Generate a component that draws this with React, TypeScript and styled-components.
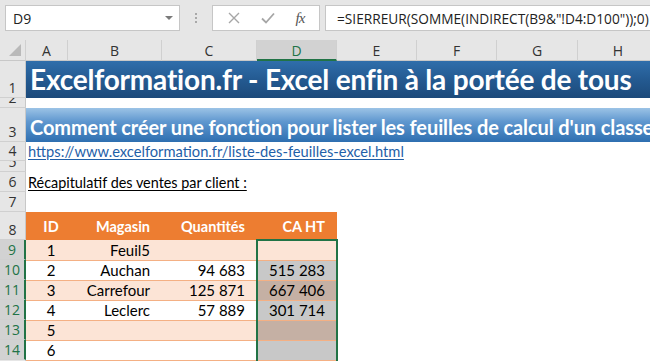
import React from 'react';
import styled, {createGlobalStyle, css} from 'styled-components';

const GlobalStyle = createGlobalStyle`
  html, body {
    margin: 0;
    padding: 0;
    width: 650px;
    height: 361px;
    overflow: hidden;
    background: #ffffff;
  }
`;

const green = '#217346';
const cellFont = `Lato, "Liberation Sans", sans-serif`;
const uiFont = `"Open Sans", "Noto Sans", "Liberation Sans", sans-serif`;

const Sheet = styled.div`
  width: 650px;
  height: 361px;
  overflow: hidden;
  background: #e6e6e6;
`;

const FormulaBar = styled.div`
  height: 40px;
  display: flex;
  align-items: flex-start;
  padding: 5px 0 0 5px;
  box-sizing: border-box;
  font-family: ${uiFont};
`;

const NameBox = styled.div`
  width: 175px;
  height: 26px;
  box-sizing: border-box;
  background: #fff;
  border: 1px solid #c6c6c6;
  display: flex;
  align-items: center;
  justify-content: space-between;
  padding: 0 6px 0 7px;
  font-size: 14px;
  color: #222;
`;

const DropArrow = styled.span`
  width: 0;
  height: 0;
  border-left: 4px solid transparent;
  border-right: 4px solid transparent;
  border-top: 4px solid #7a7a7a;
`;

const Grip = styled.div`
  width: 32px;
  height: 26px;
  display: flex;
  flex-direction: column;
  align-items: center;
  justify-content: center;
  gap: 2px;
  > span {
    width: 2px;
    height: 2px;
    background: #a8a8a8;
  }
`;

const ActionBox = styled.div`
  width: 108px;
  height: 26px;
  box-sizing: border-box;
  background: #fff;
  border: 1px solid #c6c6c6;
  display: flex;
  align-items: center;
  justify-content: space-around;
  padding: 0 4px;
`;

const Fx = styled.span`
  font-family: "Liberation Serif", serif;
  font-style: italic;
  font-size: 15px;
  color: #555;
  letter-spacing: -1px;
`;

const FormulaInput = styled.div`
  flex: 1;
  margin-left: 5px;
  height: 26px;
  box-sizing: border-box;
  background: #fff;
  border: 1px solid #c6c6c6;
  border-right: none;
  display: flex;
  align-items: center;
  padding-left: 11px;
  font-size: 13.7px;
  color: #222;
  white-space: nowrap;
  overflow: hidden;
`;

const Grid = styled.div`
  display: grid;
  grid-template-columns: 26px 42px 94px 95px 80px 80px 80px 81px 81px;
  grid-template-rows: 21px 37px 10px 34px 19px 11px 20px 20px 28px repeat(7, 20px);
  width: 659px;
  background: #fff;
`;

const Corner = styled.div`
  background: #e6e6e6;
  border-right: 1px solid #d0d0d0;
  border-bottom: 1px solid #c8c8c8;
  position: relative;
  &::after {
    content: '';
    position: absolute;
    right: 4px;
    bottom: 4px;
    width: 0;
    height: 0;
    border-left: 12px solid transparent;
    border-bottom: 12px solid #b9b9b9;
  }
`;

const ColHead = styled.div<{$active?: boolean}>`
  background: ${p => (p.$active ? '#d2d2d2' : '#e6e6e6')};
  border-right: 1px solid #d0d0d0;
  border-bottom: ${p => (p.$active ? `2px solid ${green}` : '1px solid #c8c8c8')};
  color: ${p => (p.$active ? green : '#333')};
  font-family: ${uiFont};
  font-size: 14px;
  display: flex;
  align-items: center;
  justify-content: center;
  padding-top: 1px;
  box-sizing: border-box;
`;

const RowHead = styled.div<{$active?: boolean}>`
  grid-column: 1;
  background: ${p => (p.$active ? '#d2d2d2' : '#e6e6e6')};
  border-bottom: 1px solid #d0d0d0;
  border-right: ${p => (p.$active ? `2px solid ${green}` : '1px solid #c8c8c8')};
  color: ${p => (p.$active ? green : '#333')};
  font-family: ${uiFont};
  font-size: 14px;
  display: flex;
  align-items: flex-end;
  justify-content: center;
  padding-bottom: 1px;
  overflow: hidden;
  line-height: 17px;
  box-sizing: border-box;
`;

const Banner = styled.div<{$variant: 'main' | 'sub'}>`
  grid-column: 2 / -1;
  display: flex;
  align-items: center;
  padding-left: 4px;
  color: #fff;
  font-family: ${cellFont};
  font-weight: 700;
  white-space: nowrap;
  overflow: hidden;
  ${p =>
    p.$variant === 'main'
      ? css`
          background: linear-gradient(180deg, #2f6eab 0%, #245a91 50%, #1c4a7a 100%);
          font-size: 28px;
          letter-spacing: -0.2px;
          padding-bottom: 2px;
        `
      : css`
          background: linear-gradient(180deg, #9cc3e6 0%, #5f97cf 40%, #2e6fb0 100%);
          font-size: 20px;
          letter-spacing: -0.1px;
          padding-top: 3px;
        `}
`;

const TextLine = styled.div<{$link?: boolean}>`
  grid-column: 2 / -1;
  display: flex;
  align-items: flex-end;
  padding: 0 0 1px 2px;
  font-family: ${cellFont};
  font-size: ${p => (p.$link ? '14.7px' : '14.4px')};
  color: ${p => (p.$link ? '#1f5fa8' : '#000')};
  text-decoration: underline;
  text-underline-offset: 2px;
  white-space: nowrap;
`;

const Blank = styled.div`
  grid-column: 2 / -1;
`;

type Align = 'left' | 'center' | 'right';

const Cell = styled.div<{$bg: string; $align?: Align; $head?: boolean; $line?: boolean; $row?: number}>`
  ${p =>
    p.$row &&
    css`
      grid-row: ${p.$row};
      grid-column: 5;
    `}
  background: ${p => p.$bg};
  border-top: ${p => (p.$line ? '1px solid #f4b084' : 'none')};
  display: flex;
  align-items: flex-end;
  justify-content: ${p => (p.$align === 'right' ? 'flex-end' : p.$align === 'center' ? 'center' : 'flex-start')};
  padding: ${p => (p.$align === 'right' ? '0 12px 1px 0' : p.$align === 'center' ? '0 0 1px 8px' : '0 0 1px 4px')};
  font-family: ${cellFont};
  font-size: ${p => (p.$head ? '14.5px' : '15px')};
  font-weight: ${p => (p.$head ? 700 : 400)};
  color: ${p => (p.$head ? '#fff' : '#000')};
  box-sizing: border-box;
  white-space: nowrap;
  ${p =>
    p.$head &&
    css`
      padding-bottom: 5px;
    `}
`;

const Empty = styled.div`
  grid-column: span 4;
`;

// range D9:D15, drawn over the cells it frames
const Selection = styled.div`
  grid-column: 5 / 6;
  grid-row: 10 / 17;
  border: 2px solid ${green};
  margin: -1px -1px 0 -1px;
  box-sizing: border-box;
  pointer-events: none;
  z-index: 2;
`;

type Row = {id: string; shop: string; qty: string; ca: string};

const rows: Row[] = [
  {id: '1', shop: 'Feuil5', qty: '', ca: ''},
  {id: '2', shop: 'Auchan', qty: '94 683', ca: '515 283'},
  {id: '3', shop: 'Carrefour', qty: '125 871', ca: '667 406'},
  {id: '4', shop: 'Leclerc', qty: '57 889', ca: '301 714'},
  {id: '5', shop: '', qty: '', ca: ''},
  {id: '6', shop: '', qty: '', ca: ''},
  {id: '', shop: '', qty: '', ca: ''},
];

const band = (i: number) => (i % 2 === 0 ? '#fce4d6' : '#ffffff');
// selection darkens every cell of the range except the active one
const selBand = (i: number) => (i === 0 ? '#fce4d6' : i % 2 === 0 ? '#c5b0a4' : '#c8c8c8');

const letters = ['A', 'B', 'C', 'D', 'E', 'F', 'G', 'H'];

export default function App() {
  return (
    <Sheet>
      <GlobalStyle/>
      <FormulaBar>
        <NameBox>
          <span>D9</span>
          <DropArrow/>
        </NameBox>
        <Grip><span/><span/><span/></Grip>
        <ActionBox>
          <svg width="12" height="12" viewBox="0 0 12 12">
            <path d="M1 1 L11 11 M11 1 L1 11" stroke="#a6a6a6" strokeWidth="1.4" fill="none"/>
          </svg>
          <svg width="14" height="12" viewBox="0 0 14 12">
            <path d="M1 6.5 L5 10.5 L13 1.5" stroke="#a6a6a6" strokeWidth="1.8" fill="none"/>
          </svg>
          <Fx>fx</Fx>
        </ActionBox>
        <FormulaInput>=SIERREUR(SOMME(INDIRECT(B9&amp;"!D4:D100"));0)</FormulaInput>
      </FormulaBar>
      <Grid>
        <Corner/>
        {letters.map(l => (
          <ColHead key={l} $active={l === 'D'}>{l}</ColHead>
        ))}

        <RowHead>1</RowHead>
        <Banner $variant="main">Excelformation.fr - Excel enfin à la portée de tous</Banner>
        <RowHead>2</RowHead>
        <Blank/>
        <RowHead>3</RowHead>
        <Banner $variant="sub">Comment créer une fonction pour lister les feuilles de calcul d'un classeur</Banner>
        <RowHead>4</RowHead>
        <TextLine $link>https://www.excelformation.fr/liste-des-feuilles-excel.html</TextLine>
        <RowHead>5</RowHead>
        <Blank/>
        <RowHead>6</RowHead>
        <TextLine>Récapitulatif des ventes par client :</TextLine>
        <RowHead>7</RowHead>
        <Blank/>

        <RowHead>8</RowHead>
        <Cell $bg="#ed7d31" $head $align="center">ID</Cell>
        <Cell $bg="#ed7d31" $head $align="right">Magasin</Cell>
        <Cell $bg="#ed7d31" $head $align="right">Quantités</Cell>
        <Cell $bg="#ed7d31" $head $align="right">CA HT</Cell>
        <Empty/>

        {rows.map((r, i) => (
          <React.Fragment key={i}>
            <RowHead $active={i < 6}>{i < 6 ? 9 + i : 15}</RowHead>
            <Cell $bg={band(i)} $line={i > 0} $align="center">{r.id}</Cell>
            <Cell $bg={band(i)} $line={i > 0} $align="right">{r.shop}</Cell>
            <Cell $bg={band(i)} $line={i > 0} $align="right">{r.qty}</Cell>
            <Cell $bg={selBand(i)} $line={i > 0} $align="right" $row={10 + i}>{r.ca}</Cell>
            <Empty/>
          </React.Fragment>
        ))}
        <Selection/>
      </Grid>
    </Sheet>
  );
}
